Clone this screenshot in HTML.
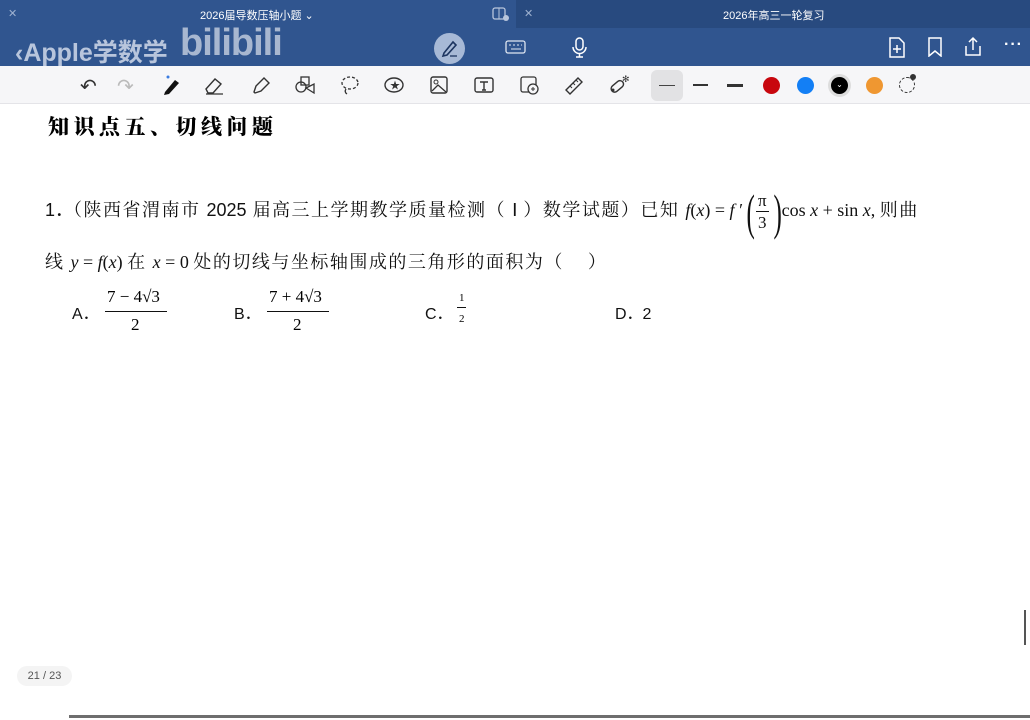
<!DOCTYPE html>
<html><head><meta charset="utf-8">
<style>
*{margin:0;padding:0;box-sizing:border-box}
body{width:1030px;height:720px;overflow:hidden;background:#fff;position:relative;font-family:"Liberation Sans","Noto Sans CJK SC",sans-serif}
.a{position:absolute;white-space:nowrap}
.tabL{left:0;top:0;width:516px;height:28px;background:#30558f}
.tabR{left:516px;top:0;width:514px;height:28px;background:#284a7f}
.nav{left:0;top:28px;width:1030px;height:38px;background:#30558f}
.tool{left:0;top:66px;width:1030px;height:38px;background:#f6f6f8;border-bottom:1px solid #e4e4e8}
.w{color:#fff;font-size:11px}
.cj{font-family:"Liberation Serif","Noto Serif CJK SC",serif;font-size:18px;color:#111;letter-spacing:1.5px}
.m{font-family:"Liberation Serif",serif;font-style:italic;letter-spacing:0}
.r{font-family:"Liberation Serif",serif;letter-spacing:0}
.s{font-family:"Liberation Sans","Noto Sans CJK SC",sans-serif;letter-spacing:0}
svg{position:absolute}
.frac{display:inline-flex;align-items:center;vertical-align:middle;letter-spacing:0;margin:0 1px}
.par{font-family:"Liberation Serif",serif;font-size:50px;display:inline-block;transform:scaleX(.5);width:10px;line-height:50px}
.fr{display:inline-flex;flex-direction:column;align-items:center;font-family:"Liberation Serif",serif;font-size:17px;line-height:21px;margin:0 2px}
.fr span:first-child{border-bottom:1px solid #111;padding:0 2px}
</style></head><body>
<div class="a tabL"></div><div class="a tabR"></div><div class="a nav"></div><div class="a tool"></div>
<div class="a w" style="left:8px;top:7px;color:#9fb2d0">✕</div>
<div class="a w" style="left:200px;top:7px">2026届导数压轴小题 ⌄</div>
<div class="a w" style="left:524px;top:7px;color:#9fb2d0">✕</div>
<div class="a w" style="left:723px;top:7px">2026年高三一轮复习</div>
<svg style="left:492px;top:7px" width="18" height="14"><rect x="1" y="1" width="12" height="11" rx="2" fill="none" stroke="#b9c6dc" stroke-width="1.3"/><line x1="7" y1="1" x2="7" y2="12" stroke="#b9c6dc"/><circle cx="14" cy="11" r="3" fill="#b9c6dc"/></svg>
<div class="a" style="left:15px;top:33px;font-size:25px;font-weight:bold;color:rgba(230,235,245,.75)">‹Apple学数学</div>
<div class="a" style="left:180px;top:22px;font-size:38px;font-weight:bold;color:rgba(220,225,235,.7);letter-spacing:-1px">bilibili</div>
<div class="a" style="left:434px;top:33px;width:31px;height:31px;border-radius:50%;background:#a7b9d6"></div>
<svg style="left:440px;top:38px" width="20" height="20"><path d="M4 15 L13 4 L16 7 L7 17 L3 18 Z" fill="none" stroke="#1d3560" stroke-width="1.6"/><line x1="10" y1="18" x2="17" y2="18" stroke="#1d3560" stroke-width="1.3"/></svg>
<svg style="left:505px;top:40px" width="22" height="14"><rect x="1" y="1" width="19" height="12" rx="2" fill="none" stroke="#dfe6f1" stroke-width="1.3"/><path d="M4 5h2M8 5h2M12 5h2M16 5h1M6 9h10" stroke="#dfe6f1"/></svg>
<svg style="left:572px;top:37px" width="16" height="22"><rect x="4" y="1" width="7" height="12" rx="3.5" fill="none" stroke="#fff" stroke-width="1.5"/><path d="M1 10a6.5 6.5 0 0 0 13 0M7.5 17v3M4 20h7" fill="none" stroke="#fff" stroke-width="1.5"/></svg>
<svg style="left:888px;top:37px" width="18" height="21"><path d="M2 1h9l5 5v14H2Z" fill="none" stroke="#fff" stroke-width="1.5"/><path d="M9 8v8M5 12h8" stroke="#fff" stroke-width="1.5"/></svg>
<svg style="left:927px;top:37px" width="16" height="20"><path d="M2 1h12v18l-6-5-6 5Z" fill="none" stroke="#fff" stroke-width="1.5"/></svg>
<svg style="left:963px;top:36px" width="20" height="21"><path d="M10 14V2M6 6l4-4 4 4M3 10v9h14v-9" fill="none" stroke="#fff" stroke-width="1.5"/></svg>
<div class="a" style="left:1004px;top:36px;color:#fff;font-size:16px;font-weight:bold;letter-spacing:1px">···</div>
<div class="a" style="left:80px;top:74px;font-size:20px;color:#333">↶</div>
<div class="a" style="left:117px;top:74px;font-size:20px;color:#bbb">↷</div>
<svg style="left:160px;top:74px" width="24" height="24"><path d="M5 18 L15 6 L19 9 L9 20 L4 21Z" fill="#111"/><circle cx="8" cy="3" r="1.5" fill="#3a7be0"/></svg>
<svg style="left:203px;top:75px" width="22" height="20"><path d="M3 14 L12 4 L18 9 L10 18 H5Z" fill="none" stroke="#333" stroke-width="1.4"/><line x1="3" y1="19" x2="20" y2="19" stroke="#333" stroke-width="1.3"/></svg>
<svg style="left:250px;top:75px" width="22" height="20"><path d="M4 17 L6 11 L14 3 L19 8 L11 16 L5 18Z" fill="none" stroke="#333" stroke-width="1.4"/></svg>
<svg style="left:294px;top:75px" width="22" height="20"><rect x="7" y="2" width="8" height="8" fill="none" stroke="#333" stroke-width="1.3"/><circle cx="7" cy="12" r="5" fill="none" stroke="#333" stroke-width="1.3"/><path d="M12 13 L20 9 V18Z" fill="none" stroke="#333" stroke-width="1.3"/></svg>
<svg style="left:340px;top:75px" width="20" height="20"><ellipse cx="10" cy="8" rx="8" ry="6" fill="none" stroke="#333" stroke-width="1.3" stroke-dasharray="3 2"/><path d="M6 14 Q4 17 7 19" fill="none" stroke="#333" stroke-width="1.3"/></svg>
<svg style="left:383px;top:76px" width="24" height="18"><ellipse cx="11" cy="9" rx="9" ry="7" fill="none" stroke="#333" stroke-width="1.4"/><text x="7" y="13" font-size="10" fill="#333">★</text></svg>
<svg style="left:429px;top:75px" width="20" height="20"><rect x="2" y="2" width="16" height="16" rx="2" fill="none" stroke="#333" stroke-width="1.4"/><circle cx="7" cy="7" r="2" fill="none" stroke="#333"/><path d="M3 16 L9 10 L17 17" fill="none" stroke="#333" stroke-width="1.3"/></svg>
<svg style="left:473px;top:76px" width="22" height="18"><rect x="2" y="2" width="18" height="14" rx="2" fill="none" stroke="#333" stroke-width="1.4"/><path d="M7 6h8M11 6v8M9 14h4" stroke="#333" stroke-width="1.4"/></svg>
<svg style="left:519px;top:75px" width="22" height="20"><rect x="2" y="2" width="15" height="15" rx="2" fill="none" stroke="#333" stroke-width="1.3"/><circle cx="14" cy="14" r="5" fill="#f6f6f8" stroke="#333" stroke-width="1.3"/><path d="M12 14h4M14 12v4" stroke="#333"/></svg>
<svg style="left:563px;top:75px" width="22" height="20"><path d="M3 15 L15 3 L19 7 L7 19Z" fill="none" stroke="#333" stroke-width="1.4"/><path d="M7 11l2 2M10 8l2 2M13 5l2 2" stroke="#333"/></svg>
<svg style="left:607px;top:74px" width="24" height="22"><rect x="3" y="9" width="14" height="7" rx="3.5" transform="rotate(-40 10 12)" fill="none" stroke="#333" stroke-width="1.4"/><circle cx="6" cy="16" r="1.5" fill="#333"/><text x="15" y="8" font-size="9" fill="#333">✻</text></svg>
<div class="a" style="left:651px;top:70px;width:32px;height:31px;border-radius:6px;background:#e2e2e4"></div>
<div class="a" style="left:659px;top:85px;width:16px;height:1px;background:#444"></div>
<div class="a" style="left:693px;top:84px;width:15px;height:2px;background:#333"></div>
<div class="a" style="left:727px;top:84px;width:16px;height:3px;background:#333"></div>
<div class="a" style="left:763px;top:77px;width:17px;height:17px;border-radius:50%;background:#c8070e"></div>
<div class="a" style="left:797px;top:77px;width:17px;height:17px;border-radius:50%;background:#137ff5"></div>
<div class="a" style="left:828px;top:74px;width:23px;height:23px;border-radius:50%;background:#ddd"></div>
<div class="a" style="left:831px;top:77px;width:17px;height:17px;border-radius:50%;background:#000;color:#fff;font-size:8px;text-align:center;line-height:16px">⌄</div>
<div class="a" style="left:866px;top:77px;width:17px;height:17px;border-radius:50%;background:#ef9731"></div>
<div class="a" style="left:899px;top:77px;width:16px;height:16px;border-radius:50%;border:1.5px dashed #333"></div>
<div class="a" style="left:910px;top:74px;width:6px;height:6px;border-radius:50%;background:#333"></div>
<div class="a" style="left:48px;top:111px;font-family:'Noto Serif CJK SC',serif;font-weight:900;font-size:21px;letter-spacing:4.5px;color:#000">知识点五、切线问题</div>
<div class="a cj" style="left:45px;top:185px;line-height:50px"><span class="s">1．</span>（陕西省渭南市 <span class="s">2025</span> 届高三上学期教学质量检测（ <span class="r">Ⅰ</span> ）数学试题）已知 <span class="m">f</span><span class="r">(</span><span class="m">x</span><span class="r">) = </span><span class="m">f</span><span class="r"> ′</span><span class="frac"><span class="par">(</span><span class="fr"><span>π</span><span>3</span></span><span class="par">)</span></span><span class="r">cos </span><span class="m">x</span><span class="r"> + sin </span><span class="m">x</span><span class="r">, </span>则曲</div>
<div class="a cj" style="left:45px;top:248px">线 <span class="m">y</span><span class="r"> = </span><span class="m">f</span><span class="r">(</span><span class="m">x</span><span class="r">) </span>在 <span class="m">x</span><span class="r"> = 0 </span>处的切线与坐标轴围成的三角形的面积为（&nbsp;&nbsp;&nbsp;&nbsp;）</div>
<div class="a s" style="left:72px;top:300px;font-size:16px;color:#111">A．</div>
<div class="a r" style="left:107px;top:287px;font-size:17px">7 − 4√3</div>
<div class="a" style="left:105px;top:311px;width:62px;height:1px;background:#111"></div>
<div class="a r" style="left:131px;top:315px;font-size:17px">2</div>
<div class="a s" style="left:234px;top:300px;font-size:16px;color:#111">B．</div>
<div class="a r" style="left:269px;top:287px;font-size:17px">7 + 4√3</div>
<div class="a" style="left:267px;top:311px;width:62px;height:1px;background:#111"></div>
<div class="a r" style="left:293px;top:315px;font-size:17px">2</div>
<div class="a s" style="left:425px;top:300px;font-size:16px;color:#111">C．</div>
<div class="a r" style="left:459px;top:292px;font-size:11px">1</div>
<div class="a" style="left:457px;top:307px;width:9px;height:1px;background:#111"></div>
<div class="a r" style="left:459px;top:313px;font-size:11px">2</div>
<div class="a s" style="left:615px;top:300px;font-size:16px;color:#111">D．2</div>
<div class="a" style="left:1024px;top:610px;width:2px;height:35px;background:#555"></div>
<div class="a" style="left:17px;top:666px;width:55px;height:20px;border-radius:10px;background:#f4f4f4;font-size:11px;color:#555;text-align:center;line-height:20px">21 / 23</div>
<div class="a" style="left:69px;top:715px;width:962px;height:3px;background:#6e6e6e"></div>
</body></html>
